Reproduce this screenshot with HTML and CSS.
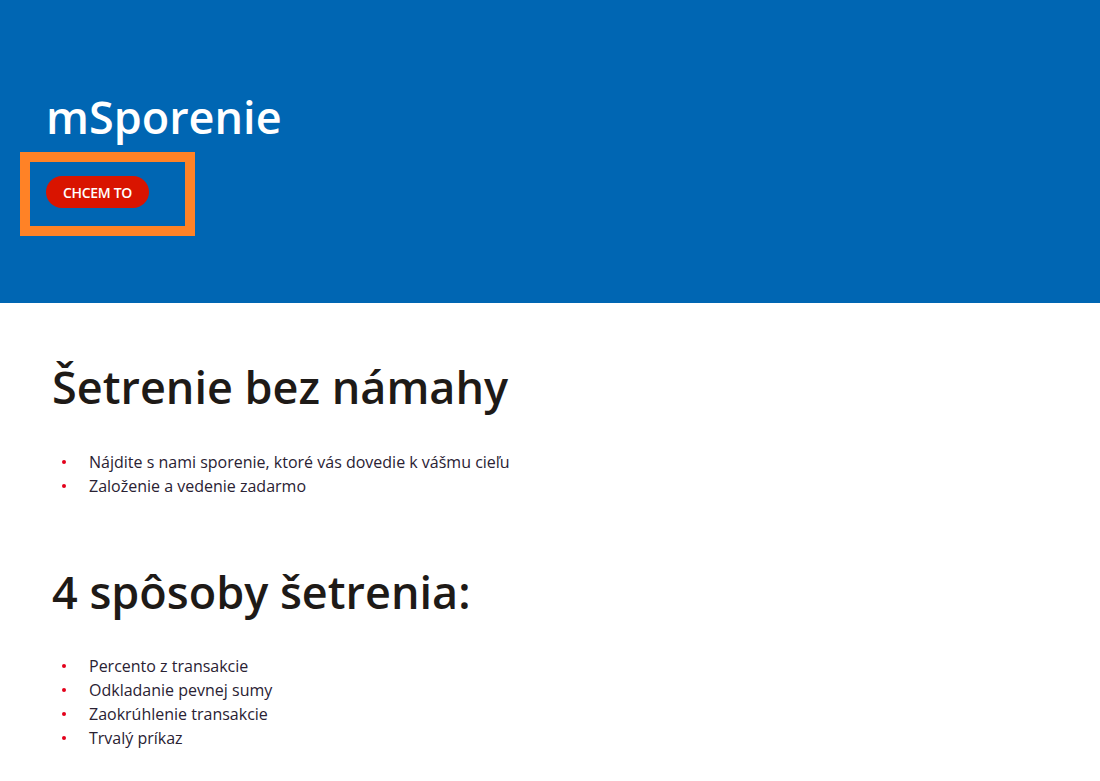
FILE: index.html
```html
<!DOCTYPE html>
<html lang="sk">
<head>
<meta charset="utf-8">
<title>mSporenie</title>
<link rel="stylesheet" href="styles.css">
</head>
<body>
<header class="hero">
  <h1 class="hero-title">mSporenie</h1>
  <div class="cta-wrap">
    <a class="cta" href="#">CHCEM TO</a>
    <span class="highlight"></span>
  </div>
</header>
<main class="content">
  <h2 class="section-title">Šetrenie bez námahy</h2>
  <ul class="bullets">
    <li>Nájdite s nami sporenie, ktoré vás dovedie k vášmu cieľu</li>
    <li>Založenie a vedenie zadarmo</li>
  </ul>
  <h2 class="section-title second">4 spôsoby šetrenia:</h2>
  <ul class="bullets tight">
    <li>Percento z transakcie</li>
    <li>Odkladanie pevnej sumy</li>
    <li>Zaokrúhlenie transakcie</li>
    <li>Trvalý príkaz</li>
  </ul>
</main>
</body>
</html>
```
FILE: styles.css
```css
* { box-sizing: border-box; }
html, body { margin: 0; padding: 0; }
body {
  font-family: "Open Sans", "Liberation Sans", sans-serif;
  background: #ffffff;
  color: #1e1e1e;
}
.hero {
  background: #0066b3;
  height: 303px;
  padding: 89px 0 0 46px;
}
.hero-title {
  margin: 0;
  color: #ffffff;
  font-size: 45px;
  font-weight: 600;
  line-height: 56px;
}
.cta-wrap {
  position: relative;
  display: inline-block;
  margin-top: 31px;
}
.cta {
  display: inline-flex;
  align-items: center;
  justify-content: center;
  height: 32px;
  width: 103px;
  border-radius: 16px;
  background: #d91400;
  color: #ffffff;
  font-size: 14px;
  font-weight: 600;
  text-decoration: none;
  letter-spacing: -0.3px;
}
.highlight {
  position: absolute;
  left: -26px;
  top: -24px;
  width: 175px;
  height: 84px;
  border: 10px solid #ff8226;
  pointer-events: none;
}
.content {
  padding: 56px 0 0 52px;
}
.section-title {
  margin: 0;
  font-size: 45px;
  font-weight: 600;
  line-height: 56px;
  color: #1e1a17;
}
.section-title.second {
  margin-top: 66px;
}
.bullets {
  list-style: none;
  margin: 35px 0 0 0;
  padding: 0;
}
.bullets.tight {
  margin-top: 34px;
}
.bullets li {
  position: relative;
  padding-left: 37px;
  font-size: 16px;
  line-height: 24px;
  color: #2a2233;
}
.bullets li::before {
  content: "";
  position: absolute;
  left: 10px;
  top: 10px;
  width: 4px;
  height: 4px;
  border-radius: 50%;
  background: #e3001b;
}
```
